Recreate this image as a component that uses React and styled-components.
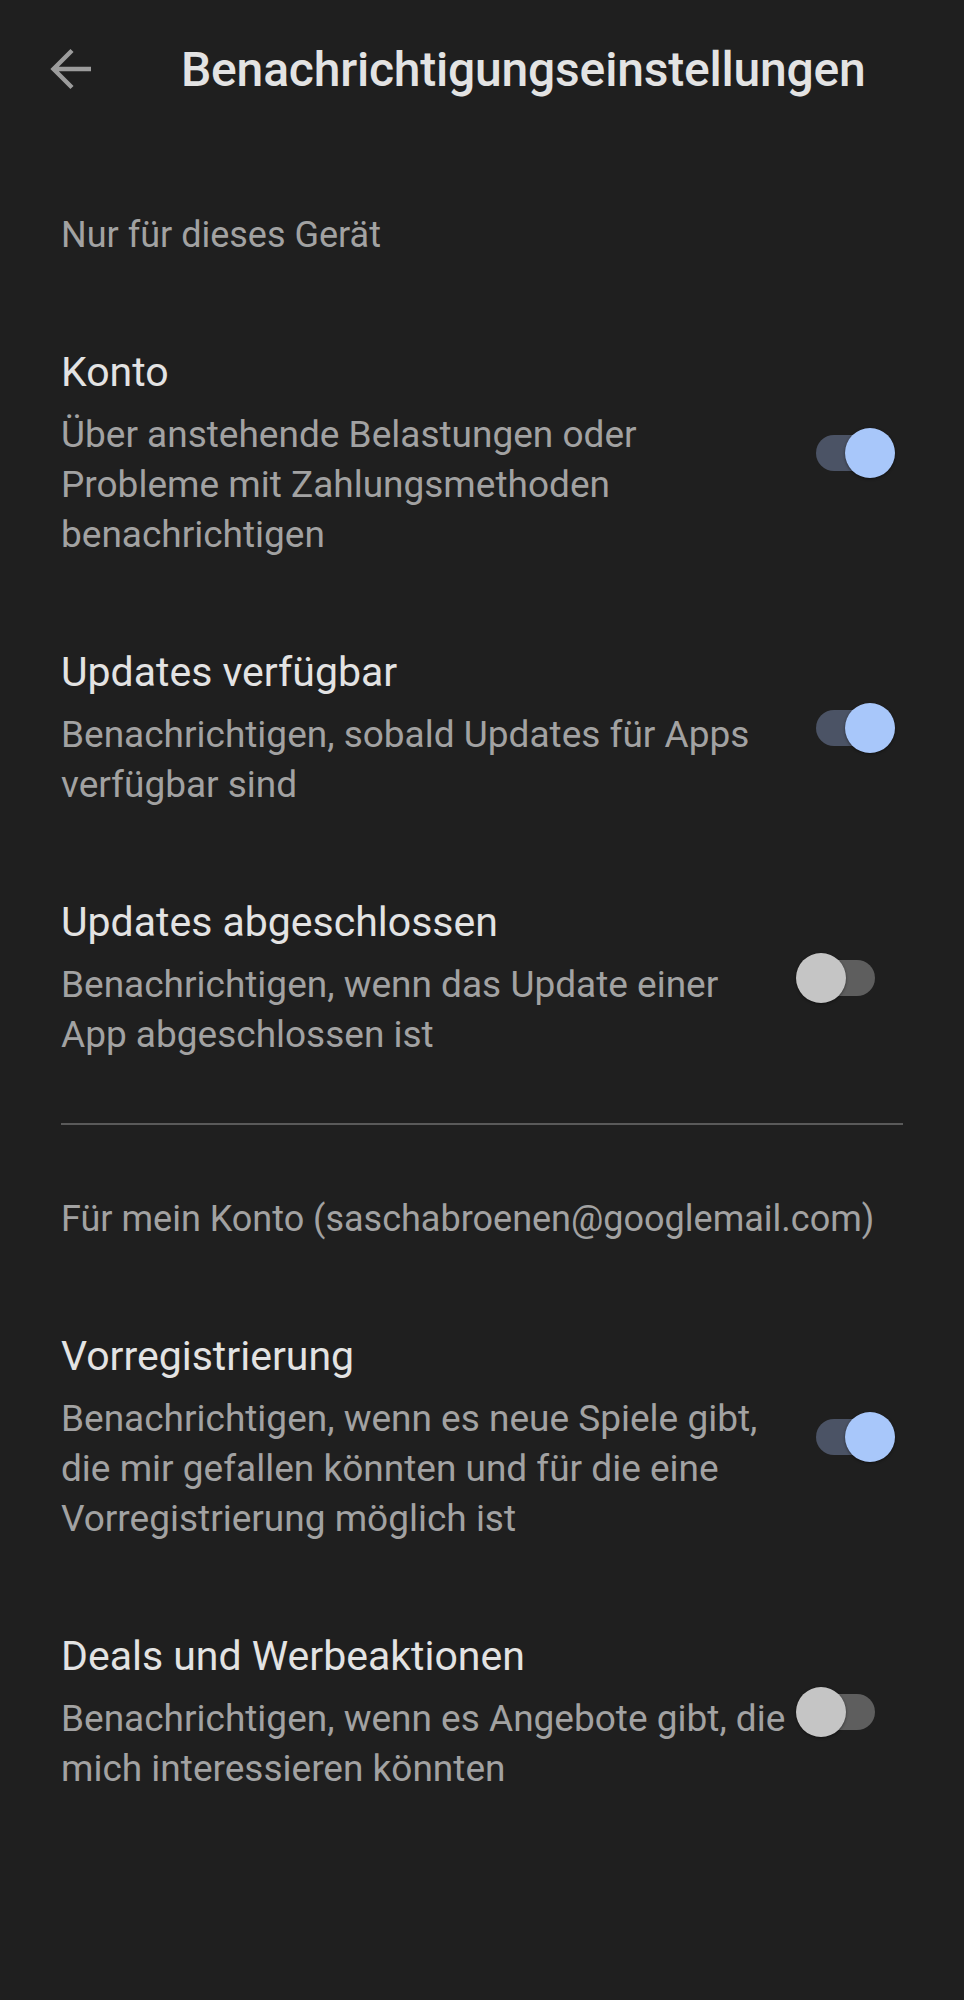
import React, { useState } from "react";
import styled, { createGlobalStyle } from "styled-components";

const Global = createGlobalStyle`
  html, body { margin: 0; padding: 0; background: #1f1f1f; }
  body { font-family: Roboto, "Noto Sans", "Liberation Sans", sans-serif; -webkit-font-smoothing: antialiased; }
  * { box-sizing: border-box; }
`;

const Page = styled.div`
  width: 964px;
  min-height: 2000px;
  background: #1f1f1f;
  color: #e3e3e3;
`;

const TopBar = styled.header`
  height: 138px;
  display: flex;
  align-items: center;
  padding-left: 48px;
`;

const BackButton = styled.button`
  width: 46px;
  height: 46px;
  padding: 0;
  border: 0;
  background: transparent;
  display: flex;
  align-items: center;
  justify-content: center;
  color: #9c9c9c;
  cursor: pointer;
`;

const Title = styled.h1`
  margin: 0 0 0 87px;
  font-size: 48px;
  font-weight: 500;
  color: #e3e3e3;
  letter-spacing: -0.2px;
`;

const Content = styled.main`
  padding: 0 69px 0 61px;
`;

const SectionLabel = styled.div`
  margin-top: ${(p) => p.$top}px;
  font-size: 36px;
  line-height: 50px;
  color: #a2a2a2;
`;

const Item = styled.div`
  display: flex;
  align-items: center;
  margin-top: 86px;
`;

const TextCol = styled.div`
  flex: 1;
  min-width: 0;
`;

const ItemTitle = styled.div`
  font-size: 41px;
  line-height: 52px;
  color: #e3e3e3;
`;

const ItemDesc = styled.div`
  margin-top: 12px;
  font-size: 37px;
  line-height: 50px;
  color: #a2a2a2;
`;

const SwitchWrap = styled.div`
  flex: none;
  width: 99px;
  padding: 0 20px;
  margin-left: 6px;
  display: flex;
  align-items: center;
`;

const Track = styled.div`
  position: relative;
  width: 59px;
  height: 36px;
  border-radius: 18px;
  background: ${(p) => (p.$on ? "#4b5365" : "#5e5e5e")};
  cursor: pointer;
`;

const Knob = styled.div`
  position: absolute;
  top: -7px;
  left: ${(p) => (p.$on ? "29px" : "-20px")};
  width: 50px;
  height: 50px;
  border-radius: 50%;
  background: ${(p) => (p.$on ? "#a8c7fa" : "#c5c5c5")};
  box-shadow: 0 1px 3px rgba(0, 0, 0, 0.45);
`;

const Divider = styled.hr`
  margin: 63px -8px 0 0;
  border: 0;
  height: 2px;
  background: #5a5a5a;
`;

function Toggle({ initial }) {
  const [on, setOn] = useState(initial);
  return (
    <SwitchWrap>
      <Track $on={on} onClick={() => setOn(!on)}>
        <Knob $on={on} />
      </Track>
    </SwitchWrap>
  );
}

function Setting({ title, desc, on }) {
  return (
    <Item>
      <TextCol>
        <ItemTitle>{title}</ItemTitle>
        <ItemDesc>{desc}</ItemDesc>
      </TextCol>
      <Toggle initial={on} />
    </Item>
  );
}

const deviceItems = [
  {
    title: "Konto",
    desc: "Über anstehende Belastungen oder Probleme mit Zahlungsmethoden benachrichtigen",
    on: true,
  },
  {
    title: "Updates verfügbar",
    desc: "Benachrichtigen, sobald Updates für Apps verfügbar sind",
    on: true,
  },
  {
    title: "Updates abgeschlossen",
    desc: "Benachrichtigen, wenn das Update einer App abgeschlossen ist",
    on: false,
  },
];

const accountItems = [
  {
    title: "Vorregistrierung",
    desc: "Benachrichtigen, wenn es neue Spiele gibt, die mir gefallen könnten und für die eine Vorregistrierung möglich ist",
    on: true,
  },
  {
    title: "Deals und Werbeaktionen",
    desc: "Benachrichtigen, wenn es Angebote gibt, die mich interessieren könnten",
    on: false,
  },
];

export default function App() {
  return (
    <Page>
      <Global />
      <TopBar>
        <BackButton aria-label="Zurück">
          <svg width="44" height="44" viewBox="0 0 44 44" fill="none">
            <path d="M42 22H4.5M23 3.5L4.5 22 23 40.5" stroke="currentColor" strokeWidth="4.4" strokeLinecap="butt" strokeLinejoin="miter" />
          </svg>
        </BackButton>
        <Title>Benachrichtigungseinstellungen</Title>
      </TopBar>
      <Content>
        <SectionLabel $top={72}>Nur für dieses Gerät</SectionLabel>
        {deviceItems.map((it) => (
          <Setting key={it.title} {...it} />
        ))}
        <Divider />
        <SectionLabel $top={69}>Für mein Konto (saschabroenen@googlemail.com)</SectionLabel>
        {accountItems.map((it) => (
          <Setting key={it.title} {...it} />
        ))}
      </Content>
    </Page>
  );
}
